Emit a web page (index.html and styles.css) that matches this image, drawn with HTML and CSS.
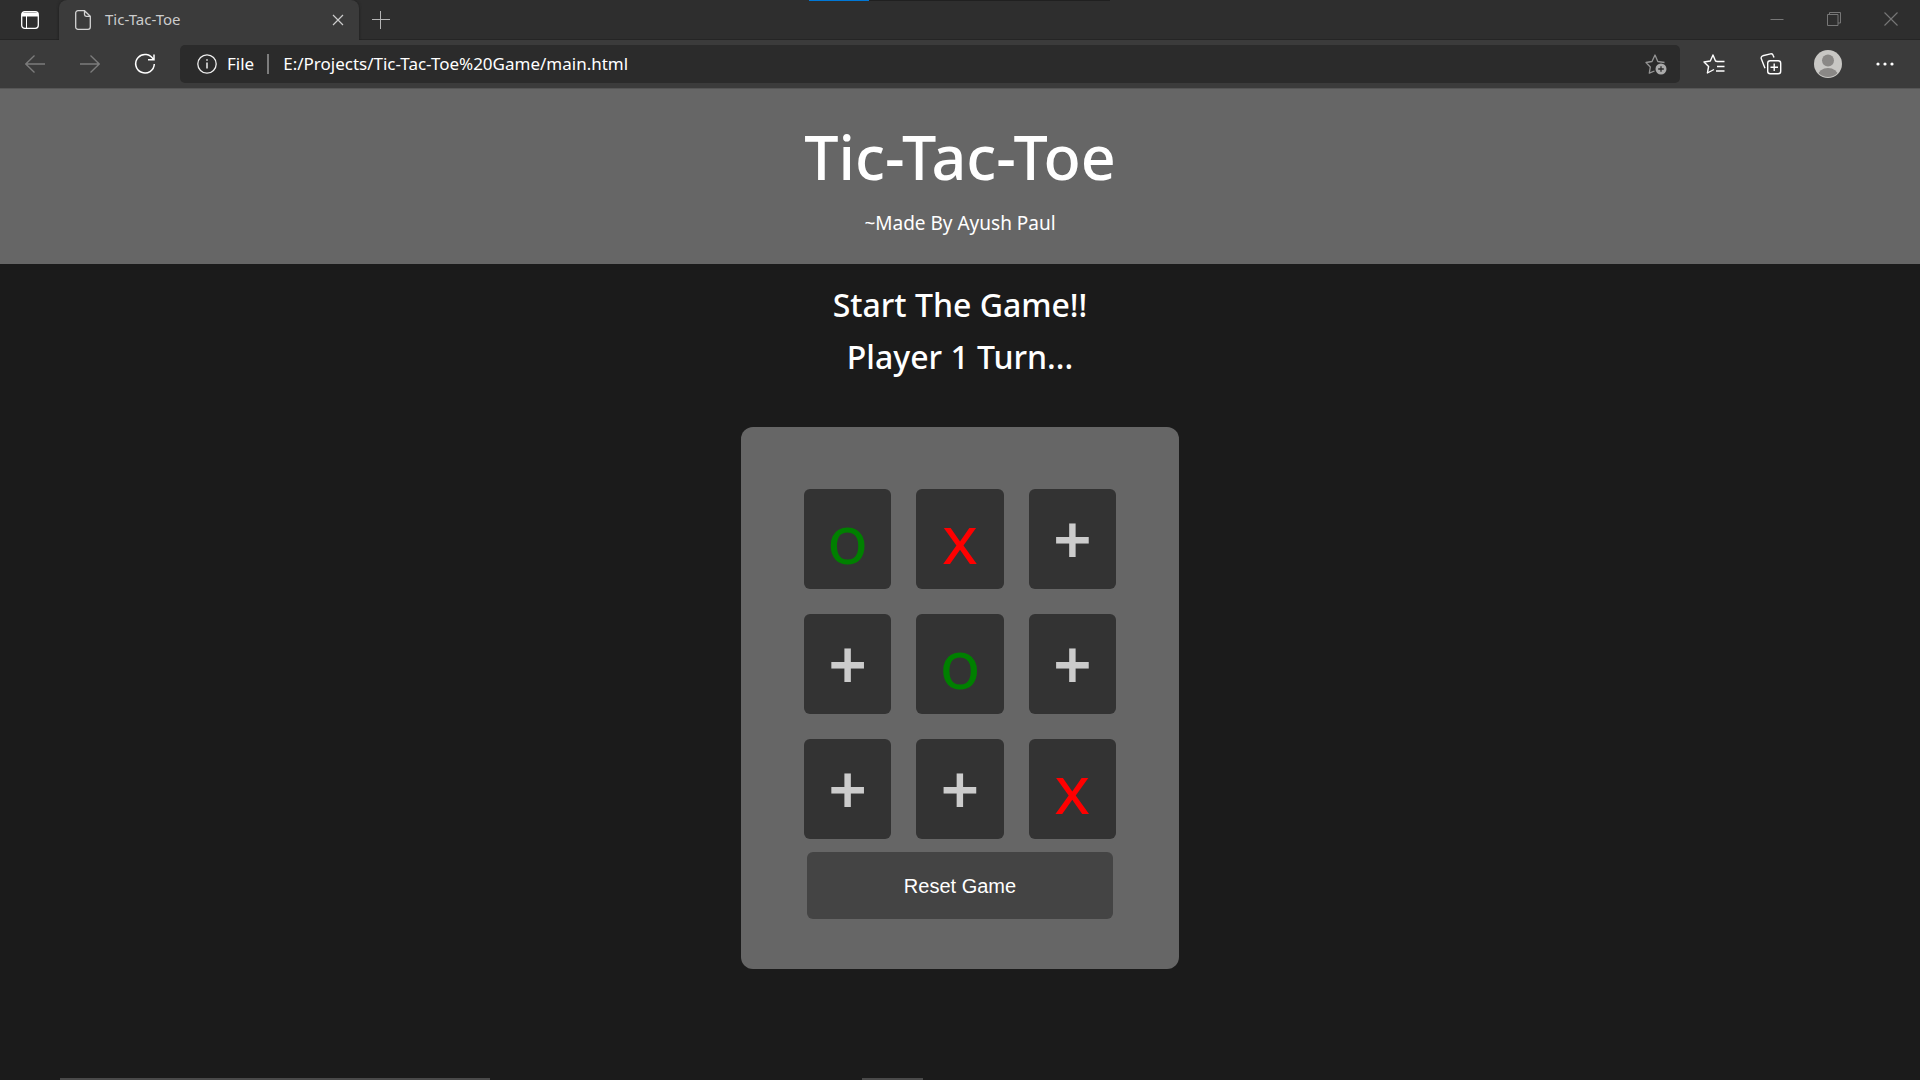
FILE: index.html
```html
<!DOCTYPE html>
<html lang="en">
<head>
<meta charset="utf-8">
<title>Tic-Tac-Toe</title>
<link rel="stylesheet" href="styles.css">
</head>
<body>
<div class="window">
  <div class="tab-strip">
    <div class="load-bar"><span class="load-progress"></span></div>
    <button class="tab-actions" aria-label="Tab actions">
      <svg width="18" height="18" viewBox="0 0 18 18" fill="none" stroke="#fff"><rect x=".7" y=".7" width="16.6" height="16.6" rx="3" stroke-width="1.3"/><path d="M1 1.500h16v4H1z" fill="#fff" stroke="none"/><path d="M5.500 5v12"/></svg>
    </button>
    <div class="tab">
      <svg width="16" height="20" viewBox="0 0 16 20" fill="none" stroke="#d4d4d4" stroke-width="1.300"><path d="M3 .7h6.500L15.300 6.300V17a2.300 2.300 0 0 1-2.300 2.300H3A2.300 2.300 0 0 1 .7 17V3A2.300 2.300 0 0 1 3 .7zM9.500 .7v3.800a1.800 1.800 0 0 0 1.800 1.800h4"/></svg>
      <span class="tab-title">Tic-Tac-Toe</span>
      <button class="tab-close" aria-label="Close tab"><svg width="12" height="12" viewBox="0 0 12 12" stroke="#ccc" stroke-width="1.200"><path d="M1 1l10 10M11 1L1 11"/></svg></button>
    </div>
    <button class="new-tab" aria-label="New tab"><svg width="18" height="18" viewBox="0 0 18 18" stroke="#b5b5b5"><path d="M0 8.500h18M8.500 0v18"/></svg></button>
    <div class="window-controls">
      <button aria-label="Minimize"><svg width="14" height="14" viewBox="0 0 14 14" stroke="#777"><path d="M.5 7.500h13"/></svg></button>
      <button aria-label="Restore"><svg width="14" height="14" viewBox="0 0 14 14" fill="none" stroke="#777"><path d="M.5 2.500h10.500v11H.5zM2.500 2.500v-2h11v10.500H11"/></svg></button>
      <button aria-label="Close"><svg width="14" height="14" viewBox="0 0 14 14" stroke="#777" stroke-width="1.100"><path d="M.5 .5l13 13M13.500 .5l-13 13"/></svg></button>
    </div>
  </div>

  <div class="toolbar">
    <button class="nav" aria-label="Back"><svg width="20" height="20" viewBox="0 0 20 20" fill="none" stroke="#7c7c7c" stroke-width="1.300"><path d="M9.500 1.500L.8 10l8.700 8.500M.8 10H20"/></svg></button>
    <button class="nav" aria-label="Forward"><svg width="20" height="20" viewBox="0 0 20 20" fill="none" stroke="#7c7c7c" stroke-width="1.300"><path d="M10.500 1.500l8.700 8.500-8.700 8.500M19.200 10H0"/></svg></button>
    <button class="nav" aria-label="Refresh"><svg width="22" height="22" viewBox="0 0 22 22" fill="none" stroke="#fff" stroke-width="1.500"><path d="M19.300 6.500A9.300 9.300 0 1 0 20.300 11M20 1.500v5.300h-6"/></svg></button>
    <div class="address">
      <svg width="20" height="20" viewBox="0 0 20 20" fill="none" stroke="#eee" stroke-width="1.300"><circle cx="10" cy="10" r="9.200"/><path d="M10 8.500v6M10 5.200v1.600" stroke-width="1.500"/></svg>
      <span class="scheme">File</span>
      <span class="divider"></span>
      <input class="url" aria-label="Address" value="E:/Projects/Tic-Tac-Toe%20Game/main.html">
      <button class="add-favorite" aria-label="Add to favorites"><svg width="22" height="22" viewBox="0 0 22 22" fill="none" stroke="#949494" stroke-width="1.300" stroke-linejoin="round"><path d="M9.500 18l-5.200 2.200 1-6.200L1 9.500l6-1L10 2l2.800 6.500 6.700 1"/><circle cx="16" cy="16" r="5.500" fill="#aaa" stroke="none"/><path d="M16 13.200v5.600M13.200 16h5.600" stroke="#2b2b2b"/></svg></button>
    </div>
    <div class="actions">
      <button aria-label="Favorites"><svg width="22" height="20" viewBox="0 0 22 20" fill="none" stroke="#fff" stroke-width="1.400" stroke-linejoin="round"><path d="M14 7.500H21.500M14 12.500h7.500M13 17h8.500"/><path d="M14 7.500l-1.500-.5L10 1 7.300 7l-6.300 1 4.600 4.500L4.400 19l6.600-3.500"/></svg></button>
      <button aria-label="Collections"><svg width="22" height="22" viewBox="0 0 22 22" fill="none" stroke="#fff" stroke-width="1.400"><rect x="7.700" y="7.700" width="13" height="13" rx="2.500"/><path d="M14.200 10.500v7.500M10.500 14.200H18M5 15.200L1.300 5.800a2.300 2.300 0 0 1 1.500-3L10.500 .9a2.300 2.300 0 0 1 2.700 1.500l.8 2.100"/></svg></button>
      <button aria-label="Profile"><svg width="28" height="28" viewBox="0 0 28 28"><clipPath id="avatar"><circle cx="14" cy="14" r="13"/></clipPath><circle cx="14" cy="14" r="14" fill="#c8c7c4"/><g clip-path="url(#avatar)" fill="#8a8886"><circle cx="14" cy="10.500" r="6"/><ellipse cx="14" cy="25.500" rx="10" ry="7.500"/></g></svg></button>
      <button aria-label="Settings and more"><svg width="18" height="4" viewBox="0 0 18 4" fill="#fff"><circle cx="2" cy="2" r="1.600"/><circle cx="9" cy="2" r="1.600"/><circle cx="16" cy="2" r="1.600"/></svg></button>
    </div>
  </div>

  <header class="banner">
    <h1>Tic-Tac-Toe</h1>
    <p>~Made By Ayush Paul</p>
  </header>

  <main class="game">
    <h2>Start The Game!!</h2>
    <h2>Player 1 Turn...</h2>
    <section class="board">
      <div class="cells">
        <button class="cell o">o</button>
        <button class="cell x">x</button>
        <button class="cell">+</button>
        <button class="cell">+</button>
        <button class="cell o">o</button>
        <button class="cell">+</button>
        <button class="cell">+</button>
        <button class="cell">+</button>
        <button class="cell x">x</button>
      </div>
      <button class="reset">Reset Game</button>
    </section>
  </main>

  <div class="taskbar-edge"><span class="edge-search"></span><span class="edge-app"></span></div>
</div>
</body>
</html>
```
FILE: styles.css
```css
* { box-sizing: border-box; }

body {
  margin: 0;
  background: #1b1b1b;
  color: #fff;
  font-family: "Noto Sans", "Open Sans", sans-serif;
}

button {
  display: flex;
  align-items: center;
  justify-content: center;
  margin: 0;
  padding: 0;
  border: 0;
  background: none;
  color: inherit;
  font: inherit;
}

.window {
  display: flex;
  flex-direction: column;
  min-height: 100vh;
}

/* Browser frame */
.tab-strip {
  position: relative;
  display: flex;
  height: 40px;
  background: #2e2e2e;
  box-shadow: inset 0 -1px #252525;
}

.load-bar {
  position: absolute;
  top: 0;
  left: 809px;
  width: 301px;
  height: 1px;
  background: #202020;
}

.load-progress {
  display: block;
  width: 20%;
  height: 1px;
  background: #0078d7;
}

.tab-actions { width: 59px; }

.tab {
  display: flex;
  align-items: center;
  width: 300px;
  padding: 0 15px 0 16px;
  border-radius: 8px 8px 0 0;
  background: #3b3b3b;
  box-shadow: 0 0 3px #1c1c1c;
  clip-path: inset(0 -4px 0 -4px);
}

.tab-title {
  flex: 1;
  margin-left: 14px;
  padding-bottom: 2px;
  color: #ccc;
  font-size: 15px;
}

.tab-close { width: 12px; }
.new-tab { width: 44px; }

.window-controls {
  display: flex;
  margin-left: auto;
  padding-right: 1px;
}

.window-controls button {
  width: 57px;
  padding-bottom: 3px;
}

.toolbar {
  display: flex;
  align-items: center;
  height: 49px;
  padding: 0 0 1px 7px;
  border-bottom: 1px solid #565656;
  background: #3b3b3b;
}

.nav { width: 55px; }

.address {
  display: flex;
  flex: 1;
  align-items: center;
  height: 38px;
  margin-left: 8px;
  padding: 0 13px 0 17px;
  border-radius: 5px;
  background: #2b2b2b;
  font-size: 17px;
}

.scheme {
  margin-left: 10px;
  padding-bottom: 1px;
}

.divider {
  width: 2px;
  height: 20px;
  margin: 0 14px 0 13px;
  background: #7d7d7d;
}

.url {
  flex: 1;
  padding: 0 0 1px;
  border: 0;
  outline: 0;
  background: none;
  color: #fff;
  font: inherit;
}

.actions {
  display: flex;
  padding: 0 7px 0 5px;
}

.actions button { width: 57px; }

/* Page */
.banner {
  display: flex;
  flex-direction: column;
  align-items: center;
  height: 175px;
  padding-top: 30px;
  background: #666;
  text-align: center;
}

.banner h1 {
  margin: 0;
  font-size: 61px;
  font-weight: 500;
  line-height: 76px;
}

.banner p {
  margin: 14px 0 0;
  font-size: 19px;
  font-weight: 400;
  line-height: 28px;
}

.game {
  display: flex;
  flex: 1;
  flex-direction: column;
  align-items: center;
  padding-top: 15px;
}

.game h2 {
  margin: 0;
  font-size: 32px;
  font-weight: 500;
  line-height: 52px;
}

.board {
  width: 438px;
  margin: 44px 0 40px;
  padding: 62px 63px 50px;
  border-radius: 12px;
  background: #666;
}

.cells {
  display: grid;
  grid-template-columns: repeat(3, 1fr);
  gap: 25px;
}

.cell {
  height: 100px;
  padding-bottom: 2px;
  border-radius: 6px;
  background: #333;
  color: #ccc;
  font-size: 68px;
  font-weight: 600;
}

.cell.o,
.cell.x {
  padding-bottom: 4px;
  font-weight: 400;
}

.cell.o { color: #008000; }
.cell.x { color: #f00; }

.reset {
  width: calc(100% - 6px);
  height: 67px;
  margin: 13px auto 0;
  padding-top: 2px;
  border-radius: 6px;
  background: #444;
  font-family: "Liberation Sans", Arial, sans-serif;
  font-size: 20px;
}

.taskbar-edge {
  display: flex;
  height: 2px;
  padding-left: 60px;
}

.edge-search {
  width: 430px;
  background: #4a4a4a;
}

.edge-app {
  width: 61px;
  margin-left: 372px;
  background: #4a4a4a;
}
```
